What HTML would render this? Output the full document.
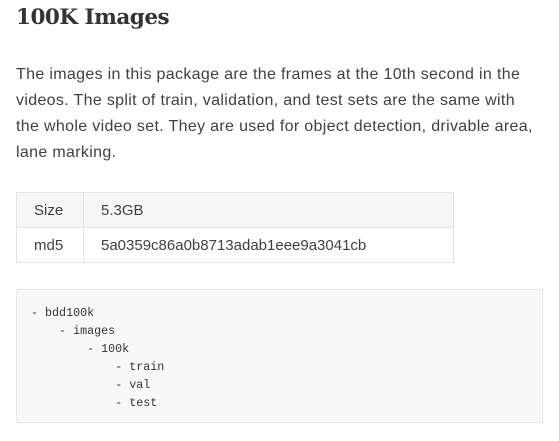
<!DOCTYPE html>
<html><head><style>
body{margin:0;background:#fff;width:559px;height:441px;overflow:hidden;color:#3a3a3a;font-family:"Liberation Sans",sans-serif}
h1{position:absolute;left:16px;top:5px;margin:0;font-family:"DejaVu Serif","Liberation Serif",serif;font-weight:bold;font-size:21.5px;color:#333;letter-spacing:-0.5px}
p{position:absolute;left:16px;top:62px;width:540px;margin:0;font-size:16px;line-height:26px;color:#404040;white-space:nowrap;letter-spacing:0.33px}
table{position:absolute;left:16px;top:192px;width:438px;border-collapse:collapse;font-size:15px;color:#404040}
td{border:1px solid #e3e3e3;height:34px;padding:0 0 0 17px}
tr:first-child td{background:#f6f6f6}
td:first-child{width:49px}
pre{position:absolute;left:16px;top:289px;width:527px;height:134px;margin:0;background:#f8f8f8;border:1px solid #e5e5e5;font-family:"Liberation Mono","DejaVu Sans Mono",monospace;font-size:11.7px;line-height:18px;color:#333;padding:0;box-sizing:border-box}
pre span{position:absolute;left:14px;top:14px;white-space:pre}
</style></head><body>
<h1>100K Images</h1>
<p>The images in this package are the frames at the 10th second in the<br>videos. The split of train, validation, and test sets are the same with<br>the whole video set. They are used for object detection, drivable area,<br>lane marking.</p>
<table><tr><td>Size</td><td>5.3GB</td></tr><tr><td>md5</td><td>5a0359c86a0b8713adab1eee9a3041cb</td></tr></table>
<pre><span>- bdd100k
    - images
        - 100k
            - train
            - val
            - test</span></pre>
</body></html>
